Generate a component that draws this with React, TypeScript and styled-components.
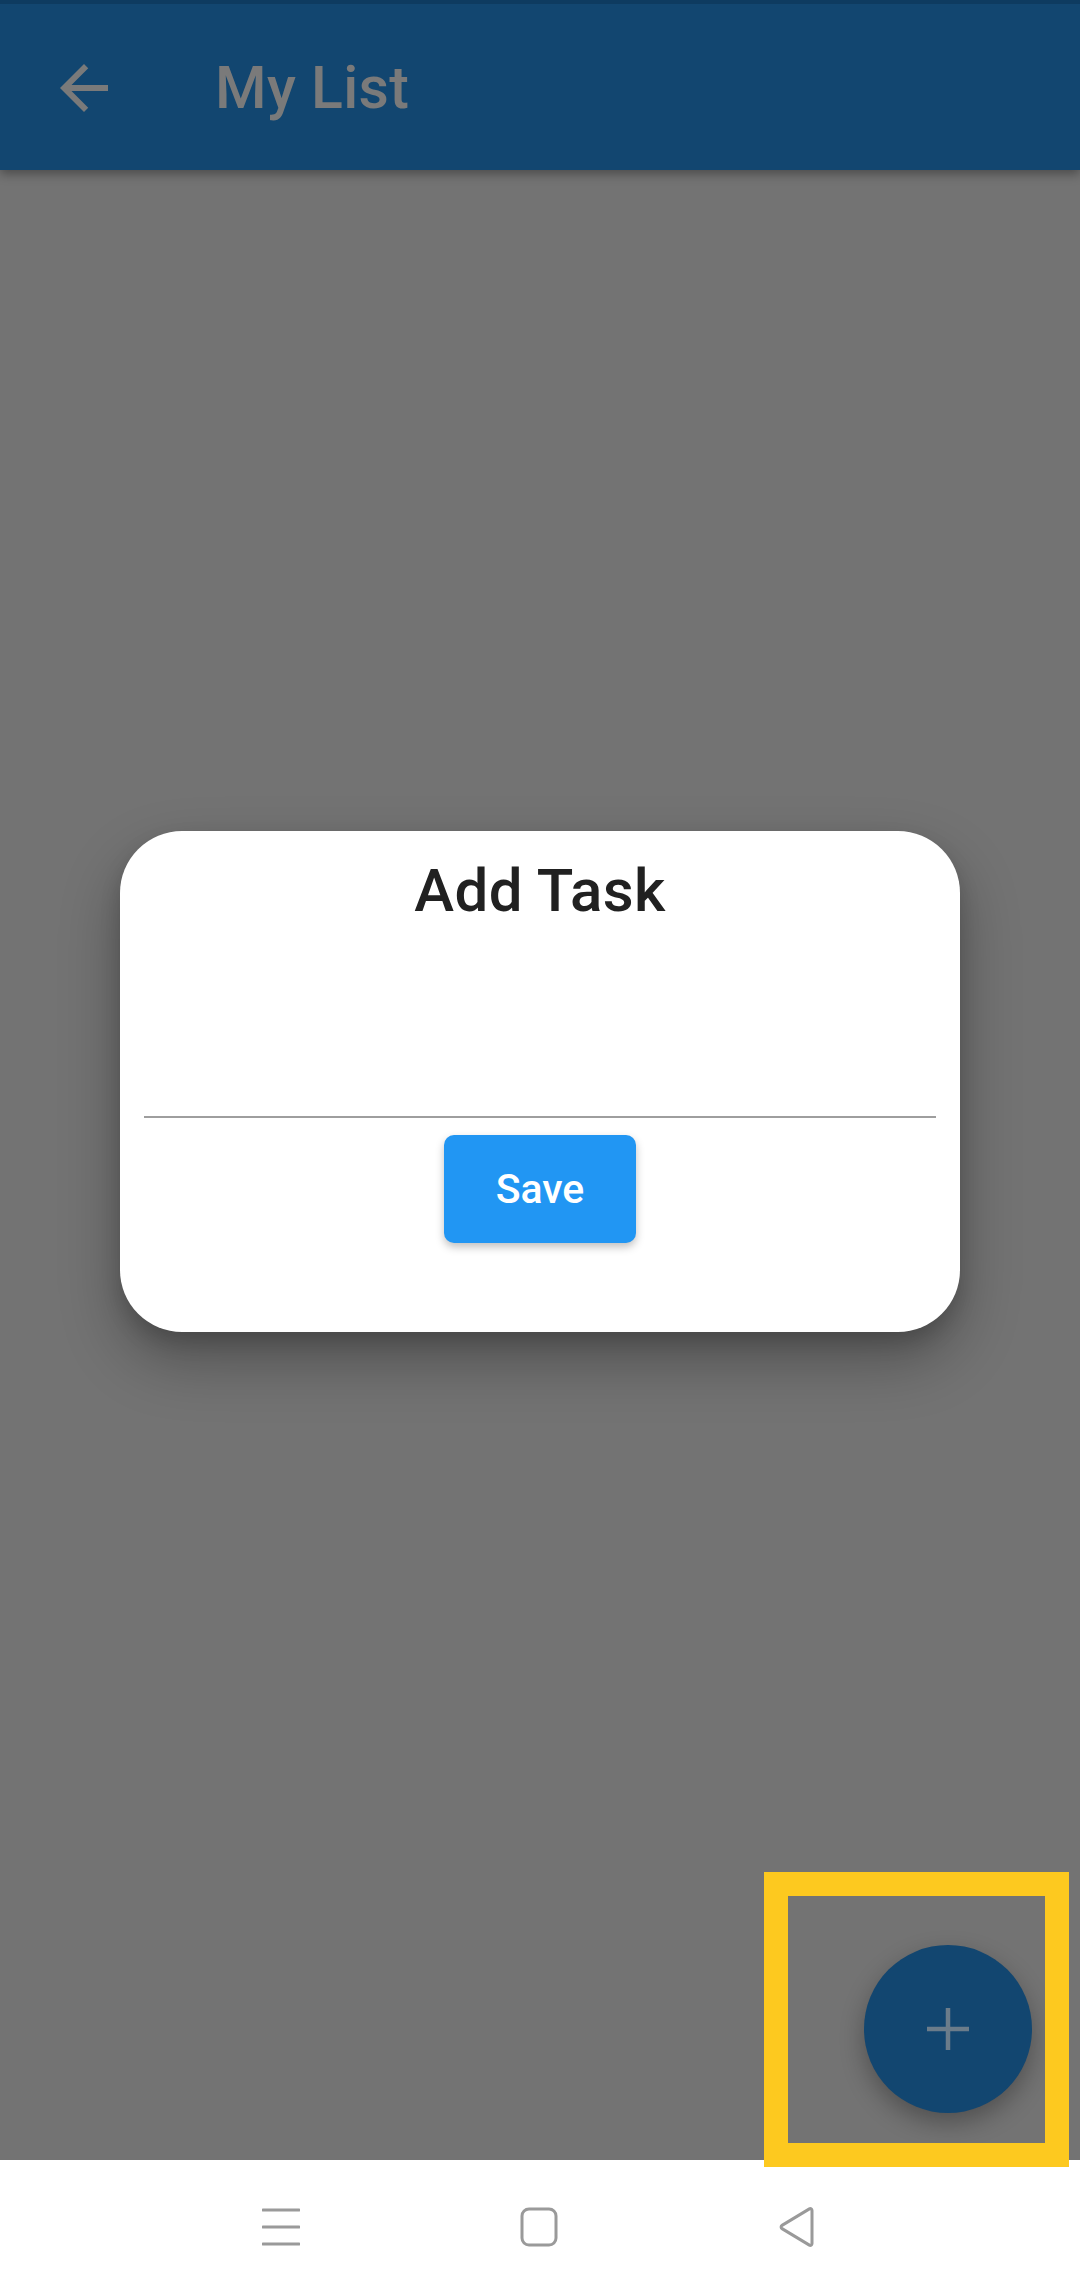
import styled, { createGlobalStyle } from "styled-components";

const GlobalStyle = createGlobalStyle`
    html, body {
        margin: 0;
        padding: 0;
        background: #ffffff;
        font-family: Roboto, "Liberation Sans", sans-serif;
    }
`;

const App = () => {
    return (
        <Screen>
            <GlobalStyle />
            <AppBar>
                <BackButton aria-label="back">
                    <svg width="72" height="72" viewBox="0 0 24 24">
                        <path fill="#7a7a7a" d="M20 11H7.83l5.59-5.59L12 4l-8 8 8 8 1.41-1.41L7.83 13H20v-2z" />
                    </svg>
                </BackButton>
                <Title>My List</Title>
            </AppBar>

            <Content>
                <Dialog>
                    <DialogTitle>Add Task</DialogTitle>
                    <TaskInput />
                    <SaveButton>Save</SaveButton>
                </Dialog>

                <Fab aria-label="add">
                    <svg width="44" height="44" viewBox="0 0 44 44">
                        <path d="M22 1v42M1 22h42" stroke="#6b7c8a" strokeWidth="4.5" />
                    </svg>
                </Fab>
                <Highlight />
            </Content>

            <NavBar>
                <NavIcon>
                    <svg width="38" height="38" viewBox="0 0 38 38">
                        <path d="M1 2h36M1 19h36M1 36h36" stroke="#9a9a9a" strokeWidth="3" strokeLinecap="round" />
                    </svg>
                </NavIcon>
                <NavIcon>
                    <svg width="38" height="40" viewBox="0 0 38 40">
                        <rect x="2" y="2" width="34" height="36" rx="7" fill="none" stroke="#9a9a9a" strokeWidth="3" />
                    </svg>
                </NavIcon>
                <NavIcon>
                    <svg width="38" height="40" viewBox="0 0 38 40">
                        <path d="M34 3.5v33c0 1.5-1.4 2.3-2.6 1.6L4 21.6c-1.2-0.7-1.2-2.5 0-3.2L31.4 1.9C32.6 1.2 34 2 34 3.5z" fill="none" stroke="#9a9a9a" strokeWidth="3" strokeLinejoin="round" />
                    </svg>
                </NavIcon>
            </NavBar>
        </Screen>
    );
};

export default App;

const Screen = styled.div`
    width: 1080px;
    height: 2293px;
    display: flex;
    flex-direction: column;
    overflow: hidden;
`;

const AppBar = styled.header`
    height: 170px;
    box-sizing: border-box;
    border-top: 4px solid #0e3b60;
    padding-top: 2px;
    background: #124670;
    display: flex;
    align-items: center;
    box-shadow: 0 4px 10px rgba(0, 0, 0, 0.35);
    position: relative;
    z-index: 2;
`;

const BackButton = styled.div`
    width: 72px;
    height: 72px;
    margin-left: 48px;
    display: flex;
`;

const Title = styled.h1`
    margin: 0 0 0 95px;
    font-size: 59px;
    line-height: 68px;
    font-weight: 500;
    letter-spacing: 0.3px;
    color: #7a7a7a;
`;

const Content = styled.main`
    flex: 1;
    position: relative;
    background: #737373;
    padding-top: 661px;
    display: flex;
    flex-direction: column;
`;

const Dialog = styled.section`
    margin: 0 120px;
    height: 501px;
    box-sizing: border-box;
    background: #ffffff;
    border-radius: 62px;
    padding: 26px 24px 0;
    display: flex;
    flex-direction: column;
    align-items: center;
    box-shadow: 0 28px 60px rgba(0, 0, 0, 0.3), 0 10px 20px rgba(0, 0, 0, 0.15);
`;

const DialogTitle = styled.h2`
    margin: 0;
    font-size: 60px;
    line-height: 68px;
    font-weight: 500;
    letter-spacing: 0.4px;
    color: #212121;
`;

const TaskInput = styled.input`
    align-self: stretch;
    height: 193px;
    box-sizing: border-box;
    border: none;
    border-bottom: 2px solid #9e9e9e;
    outline: none;
    background: transparent;
    font-size: 40px;
`;

const SaveButton = styled.button`
    margin-top: 17px;
    width: 192px;
    height: 108px;
    border: none;
    border-radius: 10px;
    background: #2196f3;
    color: #ffffff;
    font-family: Roboto, "Liberation Sans", sans-serif;
    font-size: 41px;
    font-weight: 500;
    box-shadow: 0 4px 8px rgba(0, 0, 0, 0.25);
`;

const Fab = styled.div`
    position: absolute;
    right: 48px;
    bottom: 47px;
    width: 168px;
    height: 168px;
    border-radius: 50%;
    background: #124670;
    display: flex;
    align-items: center;
    justify-content: center;
    box-shadow: 0 10px 24px rgba(0, 0, 0, 0.3);
`;

const Highlight = styled.div`
    position: absolute;
    right: 11px;
    bottom: -7px;
    width: 305px;
    height: 295px;
    box-sizing: border-box;
    border: 24px solid #fdc91f;
    z-index: 3;
`;

const NavBar = styled.nav`
    height: 133px;
    background: #ffffff;
    display: flex;
    align-items: center;
    justify-content: center;
    gap: 220px;
    padding-right: 2px;
`;

const NavIcon = styled.div`
    width: 38px;
    display: flex;
    justify-content: center;
`;
